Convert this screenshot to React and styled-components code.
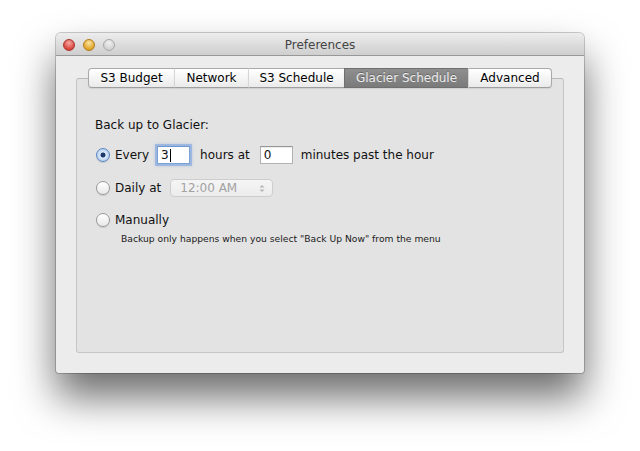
import styled, { createGlobalStyle } from "styled-components";

const GlobalStyle = createGlobalStyle`
  html, body {
    margin: 0;
    padding: 0;
    background: #ffffff;
  }
  body {
    font-family: "DejaVu Sans", "Liberation Sans", sans-serif;
    color: #111111;
  }
`;

const tabs = [
  { label: "S3 Budget", width: 86 },
  { label: "Network", width: 74 },
  { label: "S3 Schedule", width: 96 },
  { label: "Glacier Schedule", width: 124 },
  { label: "Advanced", width: 84 },
];

const App = () => {
  return (
    <Page>
      <GlobalStyle />
      <Window>
        <TitleBar>
          <Lights>
            <Light $color="red" />
            <Light $color="yellow" />
            <Light $color="grey" />
          </Lights>
          <Title>Preferences</Title>
        </TitleBar>
        <Body>
          <TabBar>
            {tabs.map((t, i) => (
              <Tab
                key={t.label}
                $width={t.width}
                $active={t.label === "Glacier Schedule"}
                $first={i === 0}
                $last={i === tabs.length - 1}
              >
                {t.label}
              </Tab>
            ))}
          </TabBar>
          <Panel>
            <Heading>Back up to Glacier:</Heading>
            <OptionRow $top={11}>
              <Radio $checked />
              <Label>Every</Label>
              <Field $focused $gap={8}>3<Caret /></Field>
              <Label $gap={10}>hours at</Label>
              <Field $gap={10}>0</Field>
              <Label $gap={8}>minutes past the hour</Label>
            </OptionRow>
            <OptionRow $top={11}>
              <Radio />
              <Label>Daily at</Label>
              <Popup>
                <span>12:00 AM</span>
                <Stepper>
                  <svg width="6" height="9" viewBox="0 0 6 9">
                    <path d="M0.5 3.5 L3 1 L5.5 3.5 Z" fill="#b3b3b3" />
                    <path d="M0.5 5.5 L3 8 L5.5 5.5 Z" fill="#b3b3b3" />
                  </svg>
                </Stepper>
              </Popup>
            </OptionRow>
            <OptionRow $top={10}>
              <Radio />
              <Label>Manually</Label>
            </OptionRow>
            <Hint>Backup only happens when you select "Back Up Now" from the menu</Hint>
          </Panel>
        </Body>
      </Window>
    </Page>
  );
};

export default App;

const Page = styled.div`
  width: 640px;
  height: 451px;
  padding: 33px 0 0 56px;
  box-sizing: border-box;
`;

const Window = styled.div`
  width: 528px;
  height: 340px;
  background: #ececec;
  border-radius: 5px 5px 3px 3px;
  box-shadow: 0 24px 40px rgba(0, 0, 0, 0.58), 0 0 0 1px rgba(0, 0, 0, 0.2);
  display: flex;
  flex-direction: column;
  overflow: hidden;
`;

const TitleBar = styled.div`
  position: relative;
  height: 22px;
  flex-shrink: 0;
  background: linear-gradient(#ededed, #dadada 60%, #cfcfcf);
  border-bottom: 1px solid #989898;
  display: flex;
  align-items: center;
  justify-content: center;
`;

const Lights = styled.div`
  position: absolute;
  left: 7px;
  top: 6px;
  display: flex;
  gap: 8px;
`;

const lightColors = {
  red: ["#f7a9a4", "#d9443c", "#a8332d"],
  yellow: ["#fbe3a3", "#e0a528", "#b07b1b"],
  grey: ["#f0f0f0", "#d2d2d2", "#a8a8a8"],
};

const Light = styled.span`
  width: 12px;
  height: 12px;
  border-radius: 50%;
  box-sizing: border-box;
  background: radial-gradient(
    circle at 50% 30%,
    ${(p) => lightColors[p.$color][0]} 0,
    ${(p) => lightColors[p.$color][1]} 70%
  );
  border: 1px solid ${(p) => lightColors[p.$color][2]};
`;

const Title = styled.div`
  font-size: 12px;
  color: #444444;
  margin-top: 1px;
`;

const Body = styled.div`
  flex: 1;
  display: flex;
  flex-direction: column;
  padding: 12px 20px 20px;
`;

const TabBar = styled.div`
  display: flex;
  justify-content: center;
  height: 20px;
  margin-bottom: -10px;
  position: relative;
  z-index: 1;
`;

const Tab = styled.div`
  width: ${(p) => p.$width}px;
  height: 20px;
  box-sizing: border-box;
  display: flex;
  align-items: center;
  justify-content: center;
  white-space: nowrap;
  font-size: 12px;
  color: ${(p) => (p.$active ? "#ececec" : "#000000")};
  background: ${(p) =>
    p.$active
      ? "linear-gradient(#8f8f8f, #7a7a7a)"
      : "linear-gradient(#ffffff, #f5f5f5 50%, #eaeaea)"};
  border-top: 1px solid ${(p) => (p.$active ? "#6f6f6f" : "#a9a9a9")};
  border-bottom: 1px solid ${(p) => (p.$active ? "#6f6f6f" : "#9e9e9e")};
  border-left: 1px solid ${(p) => (p.$first ? "#a9a9a9" : p.$active ? "#6f6f6f" : "#d6d6d6")};
  border-right: ${(p) => (p.$last ? "1px solid #a9a9a9" : "none")};
  border-radius: ${(p) => (p.$first ? "4px 0 0 4px" : p.$last ? "0 4px 4px 0" : "0")};
  text-shadow: ${(p) => (p.$active ? "0 -1px 0 rgba(0,0,0,0.25)" : "0 1px 0 #fff")};
  box-shadow: 0 1px 1px rgba(0, 0, 0, 0.08);
`;

const Panel = styled.div`
  flex: 1;
  background: #e3e3e3;
  border: 1px solid #c6c6c6;
  border-top-color: #b8b8b8;
  border-radius: 3px;
  padding: 38px 18px 0;
  display: flex;
  flex-direction: column;
  align-items: flex-start;
`;

const Heading = styled.div`
  font-size: 12px;
  line-height: 16px;
  height: 16px;
`;

const OptionRow = styled.div`
  display: flex;
  align-items: center;
  height: 22px;
  margin-top: ${(p) => p.$top}px;
`;

const Radio = styled.span`
  width: 14px;
  height: 14px;
  margin-left: 1px;
  border-radius: 50%;
  box-sizing: border-box;
  flex-shrink: 0;
  border: 1px solid ${(p) => (p.$checked ? "#5a86c2" : "#9a9a9a")};
  background: ${(p) =>
    p.$checked
      ? "radial-gradient(circle at 50% 50%, #1b3a6a 0, #1b3a6a 2.2px, #dbe8f7 2.8px, #9fc0ea 100%)"
      : "linear-gradient(#ffffff, #e9e9e9)"};
  box-shadow: 0 1px 1px rgba(0, 0, 0, 0.12);
`;

const Label = styled.span`
  font-size: 12px;
  margin-left: ${(p) => (p.$gap != null ? p.$gap : 5)}px;
  white-space: nowrap;
`;

const Field = styled.span`
  display: flex;
  align-items: center;
  width: 33px;
  height: 18px;
  box-sizing: border-box;
  margin-left: ${(p) => p.$gap}px;
  padding-left: 3px;
  font-size: 12px;
  background: #ffffff;
  border: 1px solid ${(p) => (p.$focused ? "#7aa2d6" : "#b1b1b1")};
  border-top-color: ${(p) => (p.$focused ? "#6f98cf" : "#959595")};
  box-shadow: ${(p) =>
    p.$focused
      ? "0 0 0 2px rgba(120, 160, 220, 0.55), 0 0 3px 2px rgba(120,160,220,0.35)"
      : "inset 0 1px 1px rgba(0,0,0,0.08)"};
`;

const Caret = styled.span`
  width: 1px;
  height: 13px;
  background: #000;
  margin-left: 1px;
`;

const Popup = styled.div`
  margin-left: 9px;
  width: 103px;
  height: 18px;
  box-sizing: border-box;
  display: flex;
  align-items: center;
  justify-content: space-between;
  padding: 0 7px 0 9px;
  border: 1px solid #cdcdcd;
  border-radius: 4px;
  background: linear-gradient(#f5f5f5, #ececec);
  color: #a2a2a2;
  font-size: 12px;
`;

const Stepper = styled.span`
  display: flex;
  align-items: center;
`;

const Hint = styled.div`
  font-size: 9.2px;
  margin: 2px 0 0 26px;
  color: #1a1a1a;
  white-space: nowrap;
`;
